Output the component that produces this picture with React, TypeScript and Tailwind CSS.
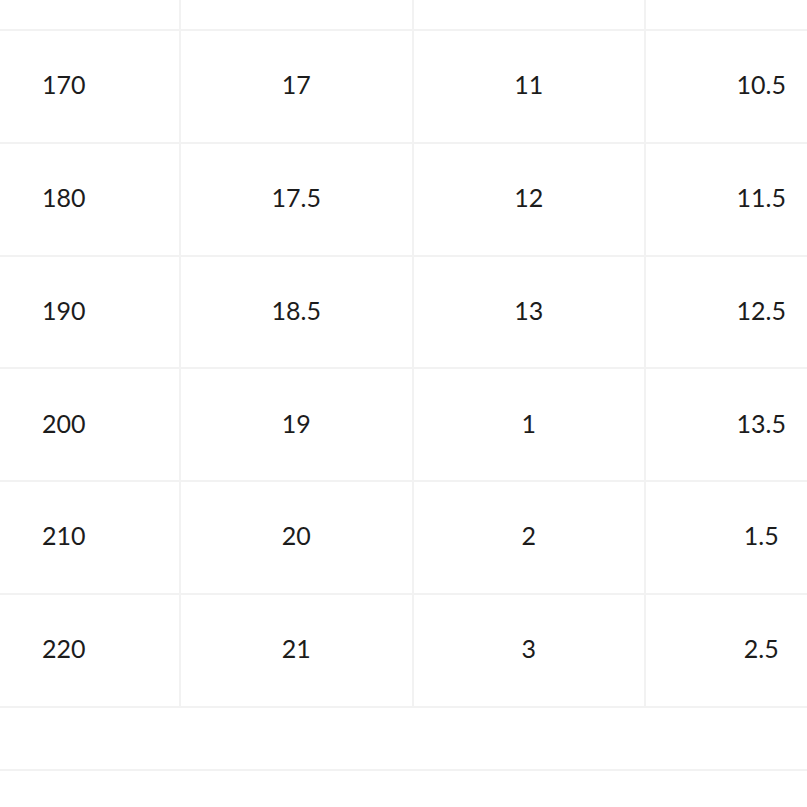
import React from "react";

const rows = [
  ["170", "17", "11", "10.5"],
  ["180", "17.5", "12", "11.5"],
  ["190", "18.5", "13", "12.5"],
  ["200", "19", "1", "13.5"],
  ["210", "20", "2", "1.5"],
  ["220", "21", "3", "2.5"],
];

export default function App() {
  return (
    <div
      className="w-[807px] h-[807px] overflow-hidden bg-white text-[#1c1c1c]"
      style={{ fontFamily: "Lato, 'Open Sans', sans-serif" }}
    >
      <div className="ml-[-51.5px] w-[930px]">
        <div className="flex h-[31px] border-b-2 border-[#f2f2f2]">
          {[0, 1, 2, 3].map((i) => (
            <div key={i} className="w-[232.5px] shrink-0 border-r-2 border-[#f2f2f2]" />
          ))}
        </div>
        {rows.map((r, ri) => (
          <div key={ri} className="flex h-[112.83px] border-b-2 border-[#f2f2f2]">
            {r.map((c, ci) => (
              <div
                key={ci}
                className="w-[232.5px] shrink-0 border-r-2 border-[#f2f2f2] flex items-center justify-center pb-[3px] text-[25px]"
              >
                {c}
              </div>
            ))}
          </div>
        ))}
        <div className="h-[63px] border-b-2 border-[#f2f2f2]" />
      </div>
    </div>
  );
}
